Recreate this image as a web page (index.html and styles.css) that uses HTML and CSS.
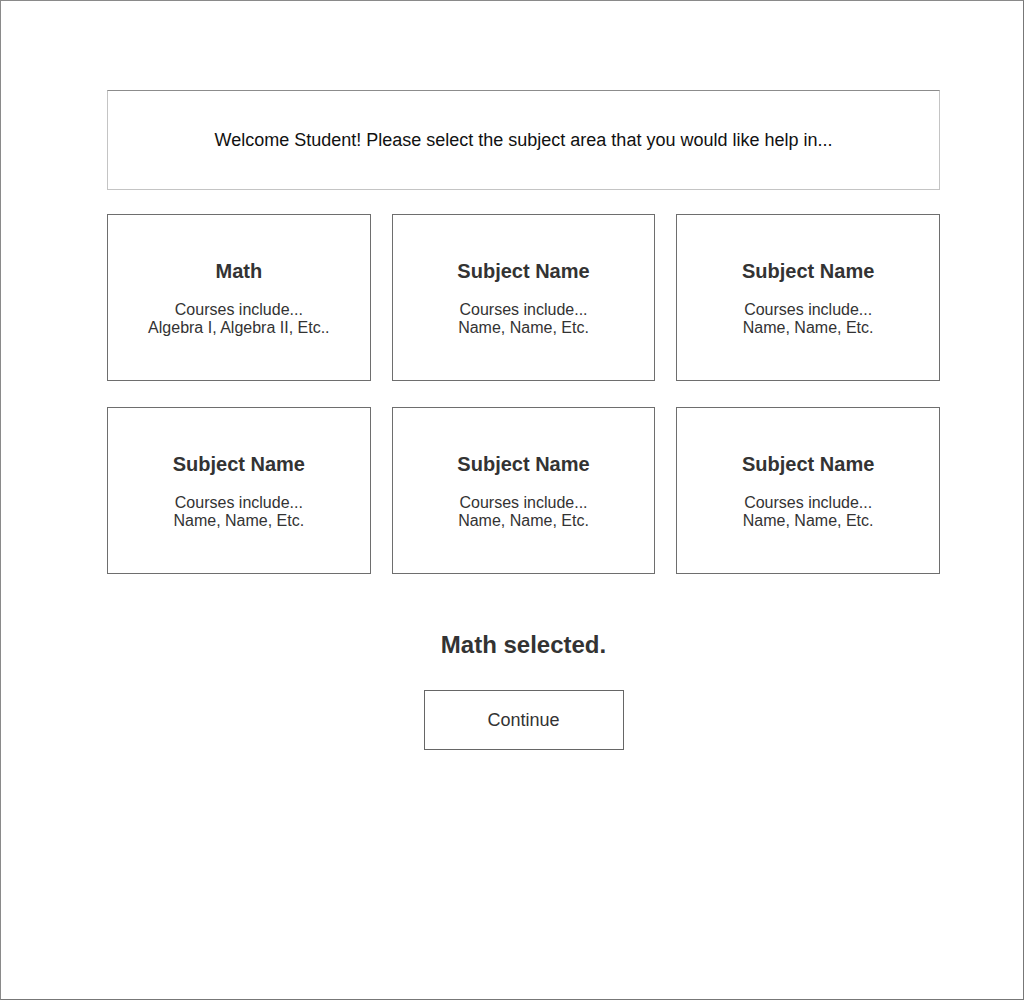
FILE: index.html
```html
<!DOCTYPE html>
<html>
<head>
<meta charset="utf-8">
<link rel="stylesheet" href="styles.css">
</head>
<body>
<div class="page">
  <div class="content">
    <div class="welcome">Welcome Student! Please select the subject area that you would like help in...</div>
    <div class="grid">
      <div class="card">
        <div class="card-title">Math</div>
        <div class="card-text">Courses include...<br>Algebra I, Algebra II, Etc..</div>
      </div>
      <div class="card">
        <div class="card-title">Subject Name</div>
        <div class="card-text">Courses include...<br>Name, Name, Etc.</div>
      </div>
      <div class="card">
        <div class="card-title">Subject Name</div>
        <div class="card-text">Courses include...<br>Name, Name, Etc.</div>
      </div>
      <div class="card">
        <div class="card-title">Subject Name</div>
        <div class="card-text">Courses include...<br>Name, Name, Etc.</div>
      </div>
      <div class="card">
        <div class="card-title">Subject Name</div>
        <div class="card-text">Courses include...<br>Name, Name, Etc.</div>
      </div>
      <div class="card">
        <div class="card-title">Subject Name</div>
        <div class="card-text">Courses include...<br>Name, Name, Etc.</div>
      </div>
    </div>
    <div class="selected">Math selected.</div>
    <div class="actions">
      <button class="continue">Continue</button>
    </div>
  </div>
</div>
</body>
</html>
```

FILE: styles.css
```css
html, body {
  margin: 0;
  padding: 0;
  background: #fff;
}
body {
  font-family: "Liberation Sans", Arial, sans-serif;
}
.page {
  width: 1024px;
  height: 1000px;
  box-sizing: border-box;
  border: 1px solid #8a8a8a;
  border-right-color: #777;
  border-bottom-color: #777;
  padding-top: 89px;
}
.content {
  width: 833px;
  margin-left: 106px;
}
.welcome {
  height: 100px;
  box-sizing: border-box;
  border: 1px solid #c4c4c4;
  border-top-color: #8c8c8c;
  display: flex;
  align-items: center;
  justify-content: center;
  font-size: 18px;
  color: #111;
  padding-top: 1px;
}
.grid {
  margin-top: 24px;
  display: grid;
  grid-template-columns: repeat(3, 1fr);
  column-gap: 21px;
  row-gap: 26px;
}
.card {
  height: 167px;
  box-sizing: border-box;
  border: 1px solid #6e6e6e;
  padding-top: 45px;
  text-align: center;
  color: #333;
}
.card-title {
  font-size: 20px;
  font-weight: bold;
  line-height: 22px;
}
.card-text {
  margin-top: 19px;
  font-size: 16px;
  line-height: 18px;
}
.selected {
  margin-top: 58px;
  text-align: center;
  font-size: 24px;
  font-weight: bold;
  line-height: 26px;
  color: #333;
}
.actions {
  margin-top: 32px;
  display: flex;
  justify-content: center;
}
.continue {
  width: 200px;
  height: 60px;
  box-sizing: border-box;
  border: 1px solid #666;
  background: #fff;
  font-family: "Liberation Sans", Arial, sans-serif;
  font-size: 18px;
  color: #333;
  padding: 0;
}
```
